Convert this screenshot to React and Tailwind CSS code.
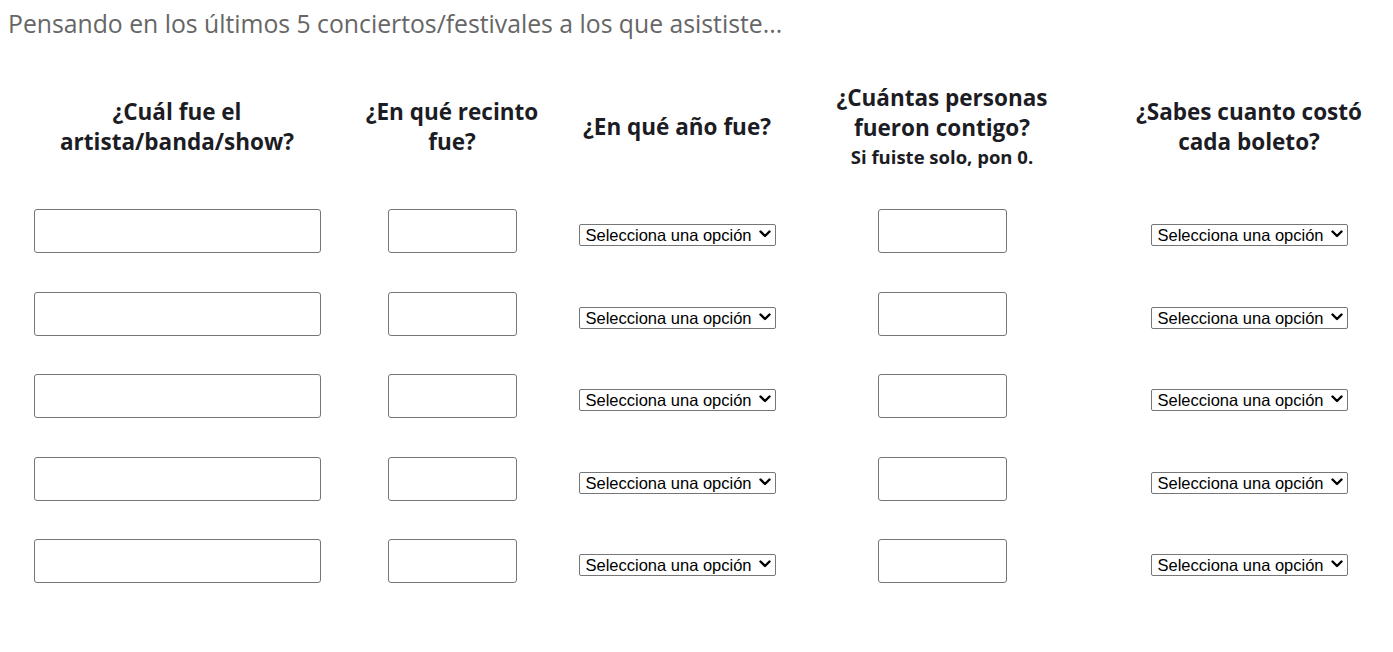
import React from "react";

const headers = [
	{ lines: ["¿Cuál fue el", "artista/banda/show?"] },
	{ lines: ["¿En qué recinto", "fue?"] },
	{ lines: ["¿En qué año fue?"] },
	{ lines: ["¿Cuántas personas", "fueron contigo?"], note: "Si fuiste solo, pon 0." },
	{ lines: ["¿Sabes cuanto costó", "cada boleto?"] },
];

const rows = [1, 2, 3, 4, 5];

const Select = () => (
	<div className="relative mt-[6px] w-[197px] h-[22px]">
		<select
			defaultValue=""
			className="appearance-none h-[22px] w-[197px] border border-[#767676] rounded-[2px] bg-white text-[16.5px] leading-[20px] text-black pl-[6px] font-['Liberation_Sans',Arial,sans-serif]"
		>
			<option value="">Selecciona una opción</option>
		</select>
		<svg className="absolute right-[5px] top-[7px] pointer-events-none" width="12" height="8" viewBox="0 0 12 8">
			<path d="M1.5 1.5 L6 6 L10.5 1.5" fill="none" stroke="#000" strokeWidth="2.4" strokeLinecap="round" strokeLinejoin="round" />
		</svg>
	</div>
);

const App = () => {
	return (
		<div className="w-full min-h-[652px] bg-white overflow-hidden font-['Open_Sans',sans-serif]">
			{/* Intro */}
			<div className="pl-[8px] pt-[7px] h-[80px] text-[24.75px] leading-[34px] text-[#666]">
				Pensando en los últimos 5 conciertos/festivales a los que asististe...
			</div>

			<div className="pl-[8px]">
				{/* Encabezados */}
				<div className="grid grid-cols-[338px_212px_238px_292px_322px] h-[94px] items-center text-center text-[#1c1c24]">
					{headers.map((h, i) => (
						<div key={i} className="flex flex-col items-center font-bold">
							{h.lines.map((l) => (
								<span key={l} className="text-[22.5px] leading-[30px] whitespace-nowrap">{l}</span>
							))}
							{h.note && <span className="text-[18.5px] leading-[28px] whitespace-nowrap">{h.note}</span>}
						</div>
					))}
				</div>

				{/* Filas */}
				<div className="mt-[16px]">
					{rows.map((r) => (
						<div key={r} className="grid grid-cols-[338px_212px_238px_292px_322px] h-[82.5px] items-center justify-items-center">
							<input type="text" className="h-[44px] w-[287px] border border-[#767676] rounded-[3px] bg-white" />
							<input type="text" className="h-[44px] w-[129px] border border-[#767676] rounded-[3px] bg-white" />
							<Select />
							<input type="text" className="h-[44px] w-[129px] border border-[#767676] rounded-[3px] bg-white" />
							<Select />
						</div>
					))}
				</div>
			</div>
		</div>
	);
};

export default App;
